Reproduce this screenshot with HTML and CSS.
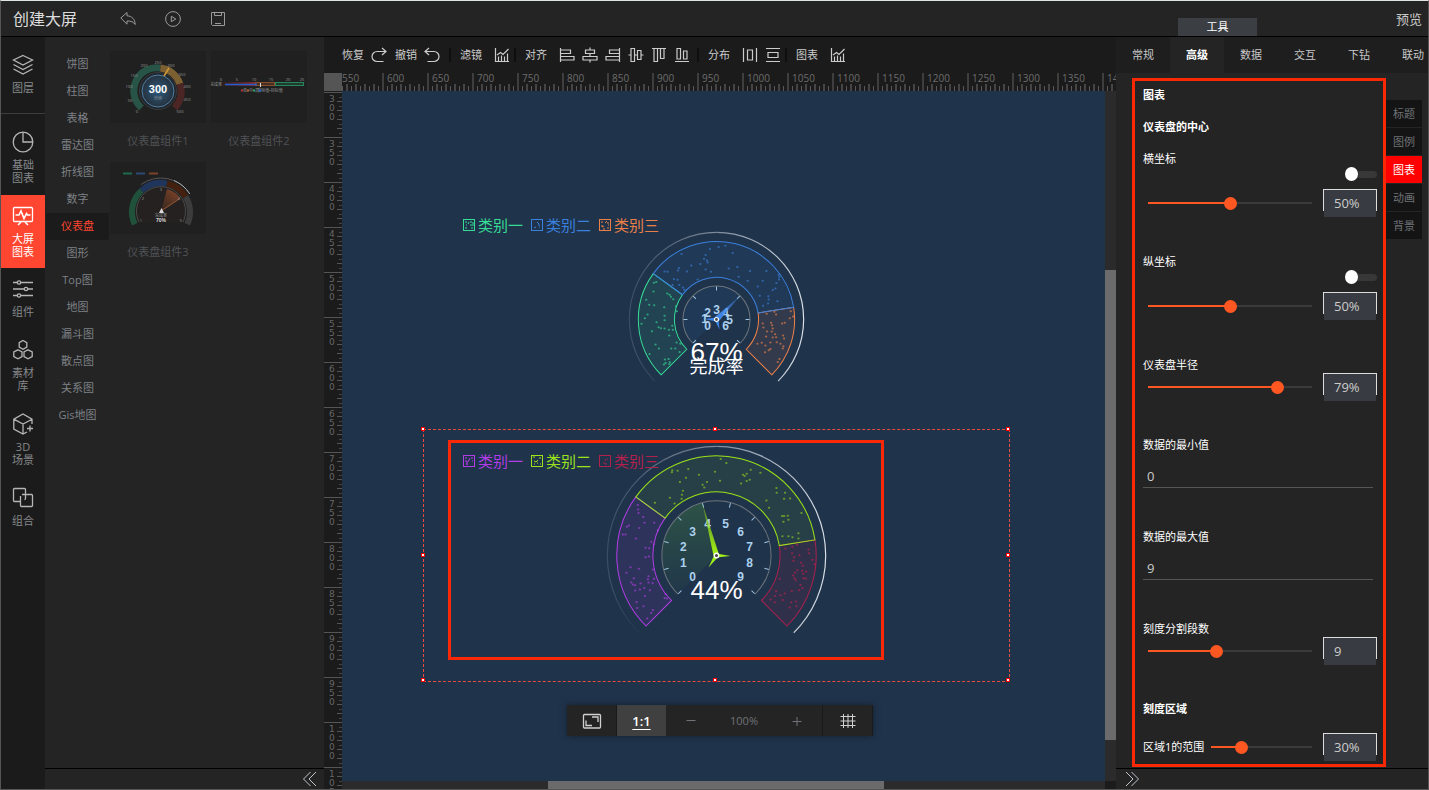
FILE: index.html
```html
<!DOCTYPE html>
<html lang="zh-CN">
<head>
<meta charset="utf-8">
<title>创建大屏</title>
<link rel="stylesheet" href="styles.css">
</head>
<body>
<svg class="defs" aria-hidden="true">
  <defs>
    <symbol id="i-chart" viewBox="0 0 16 16"><path d="M1.500 1v13.500H15M4.500 14V9.500M7.500 14V8.500M10.500 14V9.500M13.500 14V6.500M3 8l3.500-2.500L9 7.500 14.500 2"/></symbol>
    <symbol id="i-legend" viewBox="0 0 12 12"><rect x=".5" y=".5" width="11" height="11"/></symbol>
    <linearGradient id="fade"><stop offset="0" stop-color="#dfe6ee" stop-opacity=".15"/><stop offset=".5" stop-color="#dfe6ee" stop-opacity=".5"/><stop offset="1" stop-color="#eef2f6" stop-opacity=".9"/></linearGradient>
    <linearGradient id="fadeDown" x1="0" y1="0" x2="0" y2="1"><stop offset=".5" stop-color="#fff"/><stop offset=".75" stop-color="#fff"/><stop offset="1" stop-color="#000"/></linearGradient>
    <mask id="tail"><rect class="solid" x="-120" y="-120" width="120" height="200" fill="url(#fadeDown)"/><rect class="solid" x="0" y="-120" width="120" height="240" fill="#fff"/></mask>
    <linearGradient id="needleBlue" x1="0" y1="1" x2="1" y2="0"><stop offset="0" stop-color="#4a97ff"/><stop offset="1" stop-color="#3b80dd" stop-opacity=".4"/></linearGradient>
    <linearGradient id="needleGreen" x1="0" y1="1" x2="0" y2="0"><stop offset="0" stop-color="#a4f411"/><stop offset="1" stop-color="#8fd51a" stop-opacity=".45"/></linearGradient>
    <linearGradient id="sweep" x1="0" y1="1" x2="0" y2="0"><stop offset="0" stop-color="#4d9a3a" stop-opacity=".04"/><stop offset="1" stop-color="#4d9a3a" stop-opacity=".3"/></linearGradient>
    <radialGradient id="disc"><stop offset="0" stop-color="#2b5a80"/><stop offset="1" stop-color="#26323d"/></radialGradient>
    <linearGradient id="glow" x1="0" y1="1" x2=".6" y2="0"><stop offset="0" stop-color="#4a2e20" stop-opacity=".5"/><stop offset="1" stop-color="#7a4228"/></linearGradient>
    <linearGradient id="redbar"><stop offset="0" stop-color="#5c2222" stop-opacity=".2"/><stop offset="1" stop-color="#8c2a2a"/></linearGradient>
  </defs>
</svg>

<div class="app">
  <header class="topbar">
    <h1 class="topbar-title">创建大屏</h1>
    <div class="topbar-actions">
      <button class="icon-btn" aria-label="返回"><svg class="i16" viewBox="0 0 16 16"><path d="M.8 7 7 1.500v3.300c5 .2 8 3.500 8.200 8.700-1.800-2.600-4-3.600-8.200-3.500v3.200z"/></svg></button>
      <button class="icon-btn" aria-label="播放"><svg class="i16" viewBox="0 0 16 16"><circle cx="8" cy="8" r="7.400"/><path d="M6.300 5.300v5.400L10.800 8z"/></svg></button>
      <button class="icon-btn" aria-label="保存"><svg class="i16" viewBox="0 0 16 16"><path d="M1.500 1.500h13v13h-12l-1-1zM4.500 1.500v3h7v-3M5 12.500h6"/></svg></button>
    </div>
    <button class="tool-tab">工具</button>
    <a class="preview" href="#">预览</a>
  </header>

  <nav class="rail">
    <a class="rail-item rail-first" href="#"><svg class="i22" viewBox="0 0 22 22"><path d="M11 1.500 20.500 6 11 11 1.500 6zM1.500 10.500 11 15.500l9.500-5M1.500 15 11 20l9.500-5"/></svg><span>图层</span></a>
    <a class="rail-item rail-second" href="#"><svg class="i22" viewBox="0 0 22 22"><circle cx="11" cy="11" r="9.800"/><path d="M11 1.200V11h9.800"/></svg><span>基础<br>图表</span></a>
    <a class="rail-item is-active" href="#"><svg class="i22" viewBox="0 0 22 22"><rect x="1.500" y="2.500" width="19" height="14" rx="1"/><path d="M3.500 10h3.500l2-4 3 7.500 2.500-5 1 1.500h3M9 17l-3 3M13 17l3 3" stroke-width="1.600"/></svg><span>大屏<br>图表</span></a>
    <a class="rail-item" href="#"><svg class="i22" viewBox="0 0 22 22"><path d="M1 4.500h4M9 4.500h12M1 11h11M16 11h5M1 17.500h4M9 17.500h12"/><circle cx="7" cy="4.500" r="1.700"/><circle cx="14" cy="11" r="1.700"/><circle cx="7" cy="17.500" r="1.700"/></svg><span>组件</span></a>
    <a class="rail-item" href="#"><svg class="i22" viewBox="0 0 22 22"><path d="m11 1.500 3.800 2.200v4.400L11 10.300 7.200 8.100V3.700zM6 10.800l4 2.200v4.500l-4 2.300-4.200-2.300V13zM16 10.800l4.200 2.200v4.500L16 19.800l-4-2.300V13z"/></svg><span>素材<br>库</span></a>
    <a class="rail-item" href="#"><svg class="i22" viewBox="0 0 22 22"><path d="M20 11V6.200L11 1 1.800 6.200v10L11 21l4-2M1.800 6.200 11 11l9-4.800M11 11v10M18 12.500v6M15 15.500h6"/></svg><span>3D<br>场景</span></a>
    <a class="rail-item" href="#"><svg class="i22" viewBox="0 0 22 22"><path d="M8 14.500H2.500a1 1 0 0 1-1-1v-11a1 1 0 0 1 1-1h10a1 1 0 0 1 1 1v9a1 1 0 0 1-1 1"/><path d="M10 7.500h9.500a1 1 0 0 1 1 1v10a1 1 0 0 1-1 1h-10a1 1 0 0 1-1-1V9"/></svg><span>组合</span></a>
  </nav>

  <aside class="library">
    <div class="library-body">
      <ul class="kinds">
        <li><a href="#">饼图</a></li>
        <li><a href="#">柱图</a></li>
        <li><a href="#">表格</a></li>
        <li><a href="#">雷达图</a></li>
        <li><a href="#">折线图</a></li>
        <li><a href="#">数字</a></li>
        <li><a class="is-active" href="#">仪表盘</a></li>
        <li><a href="#">图形</a></li>
        <li><a href="#">Top图</a></li>
        <li><a href="#">地图</a></li>
        <li><a href="#">漏斗图</a></li>
        <li><a href="#">散点图</a></li>
        <li><a href="#">关系图</a></li>
        <li><a href="#">Gis地图</a></li>
      </ul>
      <div class="cards">
        <figure class="card">
          <svg class="thumb" viewBox="0 0 96 72">
            <g fill="none" stroke-width="7"><path stroke="#275446" d="M31.500 57A23 23 0 0 1 50.400 17.100"/><path stroke="#7c6032" d="M50.400 17.100A23 23 0 0 1 69.900 32.900"/><path stroke="#4c2525" d="M69.900 32.900A23 23 0 0 1 64.500 57"/></g>
            <circle cx="48" cy="40" r="18.500" fill="#20262b" stroke="#353b40"/>
            <circle cx="48" cy="40" r="16" fill="url(#disc)" stroke="#4f7fa6"/>
            <path d="M54 25 59 17" stroke="#d39a36" stroke-width="1.500"/>
            <text class="t-main" x="48" y="42">300</text><text class="t-tiny" x="48" y="49">分钟</text>
            <g class="t-tiny"><text x="27" y="62">0</text><text x="20" y="51">50</text><text x="19" y="37">100</text><text x="24" y="26">150</text><text x="34" y="16">200</text><text x="48" y="13">250</text><text x="61" y="16">300</text><text x="72" y="25">350</text><text x="77" y="37">400</text><text x="77" y="50">450</text><text x="70" y="62">500</text></g>
          </svg>
          <figcaption>仪表盘组件1</figcaption>
        </figure>
        <figure class="card">
          <svg class="thumb" viewBox="0 0 96 72">
            <rect class="solid" x="10" y="31" width="35" height="4" fill="url(#redbar)"/>
            <rect x="44.500" y="31.500" width="19" height="3" fill="#442f24" stroke="#8a4e2c"/>
            <rect x="64.500" y="31.500" width="28" height="3" fill="#1f3a2e" stroke="#27865a"/>
            <path d="M14 33.500h32" stroke="#245fd0" stroke-width="1.500"/><path d="M49.500 32v4" stroke="#ddd"/>
            <g class="t-tiny"><text x="5" y="35">完成率</text><text x="10" y="30">0</text><text x="26" y="30">5</text><text x="43" y="30">10</text><text x="60" y="30">15</text><text x="77" y="30">20</text><text x="91" y="30">25</text><text x="34" y="41">低</text><text x="40" y="41">中</text><text x="46" y="41">高</text><text x="59" y="41">实际值•目标值</text></g>
            <g stroke="none"><circle cx="31" cy="39.500" r="1.300" fill="#a83232"/><circle cx="37" cy="39.500" r="1.300" fill="#a8602f"/><circle cx="43" cy="39.500" r="1.300" fill="#2a9a67"/><circle cx="49" cy="39.500" r="1.300" fill="#2b67c8"/></g>
          </svg>
          <figcaption>仪表盘组件2</figcaption>
        </figure>
        <figure class="card">
          <svg class="thumb" viewBox="0 0 96 72">
            <path d="M13 11.500h9" stroke="#1e6b4c" stroke-width="2"/><path d="M26 11.500h9" stroke="#2b4877" stroke-width="2"/><path d="M39 11.500h9" stroke="#7a4228" stroke-width="2"/>
            <g fill="none" stroke-width="6"><path stroke="#20523b" d="M24.700 62.300A29 29 0 0 1 31.600 28.400"/><path stroke="#20355c" d="M31.600 28.400A29 29 0 0 1 57 21.600"/><path stroke="#44210f" d="M57 21.600A29 29 0 0 1 75.600 34.600"/><path stroke="#3c3c3c" d="M75.600 34.600A29 29 0 0 1 77.300 62.300"/></g>
            <path d="M31 22.500A34 34 0 0 1 79.800 32" fill="none" stroke="#555"/><path d="M64 18.500A34 34 0 0 1 79.800 32" fill="none" stroke="#aaa"/>
            <path d="M29 60A24.500 24.500 0 1 1 73 60" fill="#242120" stroke="#4b4b4b"/>
            <path class="solid" d="M51 50 57 27A24 24 0 0 1 70.500 36.500z" fill="url(#glow)"/>
            <path d="M51 49 69 37" stroke="#8d5535"/><path class="solid" d="m51.500 46 2.500 5h-5z" fill="#ddd"/>
            <g class="t-tiny"><text x="31" y="60">1</text><text x="33" y="38">2</text><text x="51" y="29">3</text><text x="69" y="38">4</text><text x="71" y="60">5</text><text x="51" y="55">完成率</text></g><text class="t-pct" x="51" y="60">70%</text>
          </svg>
          <figcaption>仪表盘组件3</figcaption>
        </figure>
      </div>
    </div>
    <div class="collapse collapse-left"><button class="icon-btn" aria-label="收起左侧"><svg class="i16" viewBox="0 0 16 16"><path d="M8.500 1 1.500 8l7 7M14 1 7 8l7 7"/></svg></button></div>
  </aside>

  <main class="work">
    <div class="toolbar">
      <button class="tb">恢复<svg class="i16" viewBox="0 0 16 16"><path d="M11 1l4 3.500-4 3.500M15 4.500H6a5 5 0 0 0 0 10h6.500"/></svg></button>
      <button class="tb">撤销<svg class="i16" viewBox="0 0 16 16"><path d="M5 1 1 4.500 5 8M1 4.500h9a5 5 0 0 1 0 10H3.500"/></svg></button>
      <span class="sep"></span>
      <button class="tb tb-wide">滤镜<svg class="i16"><use href="#i-chart"/></svg></button>
      <span class="sep sep-tight"></span>
      <span class="tb-label">对齐</span>
      <div class="tb-group">
        <button class="icon-btn" aria-label="左对齐"><svg class="i16" viewBox="0 0 16 16"><path d="M1.500 1v14M1.500 3h10v3.500h-10M1.500 9.500H15V13H1.500"/></svg></button>
        <button class="icon-btn" aria-label="水平居中"><svg class="i16" viewBox="0 0 16 16"><path d="M8 .5V3M8 6.500v3M8 13v2.500M3.500 3h9v3.500h-9zM1 9.500h14V13H1z"/></svg></button>
        <button class="icon-btn" aria-label="右对齐"><svg class="i16" viewBox="0 0 16 16"><path d="M14.500 1v14M14.500 3h-10v3.500h10M14.500 9.500H1V13h13.500"/></svg></button>
        <button class="icon-btn" aria-label="垂直居中"><svg class="i16" viewBox="0 0 16 16"><path d="M.5 8H3M6.500 8h3M13 8h2.500M3 1.500h3.500v13H3zM9.500 3.500H13v9H9.500z"/></svg></button>
        <button class="icon-btn" aria-label="顶对齐"><svg class="i16" viewBox="0 0 16 16"><path d="M1 1.500h14M3 1.500v13h3.500v-13M9.500 1.500v10H13v-10"/></svg></button>
        <button class="icon-btn" aria-label="底对齐"><svg class="i16" viewBox="0 0 16 16"><path d="M1 14.500h14M3 1.500h3.500v10.500H3zM9.500 4H13v8H9.500z"/></svg></button>
      </div>
      <span class="sep"></span>
      <span class="tb-label">分布</span>
      <div class="tb-group">
        <button class="icon-btn" aria-label="水平分布"><svg class="i16" viewBox="0 0 16 16"><path d="M1.500 1v14M14.500 1v14M5.500 3h5v10h-5z"/></svg></button>
        <button class="icon-btn" aria-label="垂直分布"><svg class="i16" viewBox="0 0 16 16"><path d="M1 1.500h14M1 14.500h14M3 5.500h10v5H3z"/></svg></button>
      </div>
      <span class="sep sep-tight"></span>
      <button class="tb tb-wide">图表<svg class="i16"><use href="#i-chart"/></svg></button>
    </div>

    <div class="ruler-corner"></div>
    <div class="ruler-x"><ol class="marks-x">
      <li>550</li><li>600</li><li>650</li><li>700</li><li>750</li><li>800</li><li>850</li><li>900</li><li>950</li><li>1000</li><li>1050</li><li>1100</li><li>1150</li><li>1200</li><li>1250</li><li>1300</li><li>1350</li><li>1400</li>
    </ol></div>
    <div class="ruler-y"><ol class="marks-y">
      <li><span>300</span></li><li><span>350</span></li><li><span>400</span></li><li><span>450</span></li><li><span>500</span></li><li><span>550</span></li><li><span>600</span></li><li><span>650</span></li><li><span>700</span></li><li><span>750</span></li><li><span>800</span></li><li><span>850</span></li><li><span>900</span></li><li><span>950</span></li><li><span>1000</span></li><li><span>1050</span></li>
    </ol></div>

    <section class="canvas">
      <div class="widget widget-a">
        <svg class="gauge" viewBox="-293 -126 586 252">
          <path d="M-61.500 61.500A87 87 0 1 1 61.500 61.500" fill="none" stroke="url(#fade)" stroke-width="1.200" mask="url(#tail)"/>
          <g stroke-width="1">
            <path stroke="#36dc96" fill="#36dc96" fill-opacity=".1" d="M-55.200 55.200A78 78 0 0 1-63.100-45.800L-34-24.700A42 42 0 0 0-29.700 29.700z"/>
            <path stroke="#f0824a" fill="#f0824a" fill-opacity=".09" d="M77-12.200A78 78 0 0 1 55.200 55.200L29.700 29.700A42 42 0 0 0 41.500-6.600z"/>
            <path stroke="#3b80dd" fill="#2f78c8" fill-opacity=".1" d="M-63.100-45.800A78 78 0 0 1 77-12.200L41.500-6.600A42 42 0 0 0-34-24.700z"/>
          </g>
          <g class="dots" transform="scale(.3333) translate(-829 -360)">
            <path stroke="#3b80dd" d="M724 164h1M809 149h1M835 143h1M855 139h1M877 161h1M796 167h1M791 178h1M800 183h1M802 189h1M780 194h1M753 198h1M740 216h1M796 210h1M812 217h1M716 206h1M713 213h1M673 216h1M682 217h1M865 207h1M891 203h1M929 215h1M895 232h1M922 244h1M978 215h1M967 244h1M952 261h1M1016 240h1M1017 232h1M1008 251h1M1005 267h1M997 272h1M1015 226h1M984 290h1M985 300h1M983 312h1M968 319h1M1011 305h1M958 289h1M701 239h1M712 241h1M697 257h1M717 257h1M728 264h1M732 271h1M772 240h1"/>
            <path stroke="#36dc96" d="M641 250h1M648 248h1M640 276h1M681 282h1M688 286h1M692 292h1M699 299h1M618 301h1M627 316h1M642 317h1M672 323h1M622 345h1M614 356h1M604 373h1M649 368h1M673 349h1M673 362h1M696 379h1M673 387h1M635 395h1M655 383h1M662 386h1M686 391h1M698 391h1M687 408h1M646 435h1M656 447h1M628 463h1M693 447h1M705 447h1M720 433h1M709 429h1M718 457h1M674 480h1M685 478h1M689 488h1M676 490h1M671 495h1M687 493h1M707 320h1M710 335h1"/>
            <path stroke="#f0824a" d="M979 343h1M1002 337h1M1007 345h1M1051 335h1M1058 351h1M1048 356h1M967 372h1M992 370h1M995 377h1M1025 372h1M1033 370h1M969 384h1M997 387h1M980 396h1M994 396h1M1004 404h1M1007 413h1M1028 408h1M1031 417h1M977 411h1M997 414h1M951 433h1M964 430h1M990 429h1M1009 428h1M1020 433h1M1029 440h1M1027 447h1M975 438h1M974 458h1M985 452h1M990 448h1M1017 478h1M1012 487h1"/>
          </g>
          <path class="solid" d="M0 0-23.700 23.700A33.500 33.500 0 0 1 23.700-23.700z" fill="#2f78c8" fill-opacity=".1"/>
          <path class="ring" d="M-23.700 23.700A33.500 33.500 0 1 1 23.700 23.700"/>
          <path class="ticks" d="M-33 0h4M33 0h-4M0-33v4M-23.300-23.300l2.800 2.800M23.300-23.300l-2.800 2.800M-23.300 23.300l2.800-2.800M23.300 23.300l-2.800-2.800"/>
          <g class="nums"><text x="-9" y="10">0</text><text x="-12" y="3">1</text><text x="-9" y="-3">2</text><text x="0" y="-6">3</text><text x="9" y="-3">4</text><text x="13" y="4">5</text><text x="9" y="10">6</text></g>
          <path class="solid" d="M-1.500-2.500 23-23 2.500 1.500z" fill="url(#needleBlue)"/>
          <path class="solid" d="M0-2-12-.5 0 2zM-2 0 3 10 2 0z" fill="#3f87ea"/>
          <circle r="2" fill="#444" stroke="#fff" stroke-width="1.200"/>
          <text class="pct" x="0" y="41">67%</text>
          <text class="name" x="0" y="53">完成率</text>
        </svg>
        <ul class="legend">
          <li class="c-mint"><svg class="i12" viewBox="0 0 12 12"><use href="#i-legend"/><path d="M2 3h2M5 5l1-2M8 2v2M10 3v4M2 9h2M7 6h2M8 9h2M3 6h1"/></svg>类别一</li>
          <li class="c-blue"><svg class="i12" viewBox="0 0 12 12"><use href="#i-legend"/><path d="M6 3l2 2v2M3 9l2-1M8 8h1"/></svg>类别二</li>
          <li class="c-orange"><svg class="i12" viewBox="0 0 12 12"><use href="#i-legend"/><path d="M2 3h2M6 4l2-2M9 3v2M3 6v2l2-1M8 9h2M9 6h1M4 10h2"/></svg>类别三</li>
        </ul>
      </div>

      <div class="widget widget-b is-selected">
        <svg class="gauge" viewBox="-293 -126 586 252">
          <path d="M-77.100 77.100A109 109 0 1 1 77.100 77.100" fill="none" stroke="url(#fade)" stroke-width="1.200" mask="url(#tail)"/>
          <g stroke-width="1">
            <path stroke="#b23de6" fill="#9a3cdc" fill-opacity=".12" d="M-70.400 70.400A99.500 99.500 0 0 1-80.500-58.500L-51.400-37.300A63.500 63.500 0 0 0-44.900 44.900z"/>
            <path stroke="#a9214f" fill="#b3204c" fill-opacity=".12" d="M98.300-15.600A99.500 99.500 0 0 1 70.400 70.400L44.900 44.900A63.500 63.500 0 0 0 62.700-9.900z"/>
            <path stroke="#9be21a" fill="#8fd51a" fill-opacity=".08" d="M-80.500-58.500A99.500 99.500 0 0 1 98.300-15.600L62.700-9.900A63.500 63.500 0 0 0-51.400-37.300z"/>
          </g>
          <g class="dots" transform="scale(.3333) translate(-919 -408)">
            <path stroke="#8fd51a" d="M786 153h1M785 159h1M802 154h1M834 149h1M866 166h1M827 175h1M809 188h1M914 157h1M929 184h1M890 188h1M877 196h1M882 204h1M818 214h1M815 226h1M814 238h1M779 235h1M734 250h1M793 252h1M931 119h1M948 131h1M1021 151h1M1050 160h1M998 166h1M1003 170h1M1009 163h1M1018 181h1M1009 185h1M992 192h1M1098 206h1M1099 220h1M1124 220h1M1139 237h1M1121 238h1M1068 243h1M1076 265h1M1173 281h1M1115 290h1M1121 290h1M1132 289h1M1134 301h1M1119 307h1M1164 341h1M1134 350h1M1116 350h1M1146 353h1M1164 357h1"/>
            <path stroke="#b23de6" d="M683 257h1M684 270h1M685 281h1M699 293h1M703 310h1M687 326h1M732 310h1M743 332h1M656 318h1M650 322h1M638 345h1M646 345h1M677 357h1M723 367h1M717 386h1M706 385h1M731 374h1M716 411h1M706 413h1M661 443h1M649 460h1M686 448h1M728 450h1M715 470h1M671 476h1M663 489h1M668 495h1M675 497h1M713 479h1M731 478h1M715 489h1M691 492h1M719 512h1M727 491h1M675 513h1M689 510h1M702 505h1M704 529h1M766 524h1M770 537h1M763 535h1M679 547h1M700 560h1M681 565h1M728 571h1M723 580h1M711 597h1"/>
            <path stroke="#c4204f" d="M1146 382h1M1160 376h1M1125 387h1M1145 401h1M1167 407h1M1194 390h1M1196 401h1M1149 424h1M1151 413h1M1172 430h1M1213 434h1M1206 421h1M1177 439h1M1175 454h1M1161 452h1M1154 460h1M1152 476h1M1156 482h1M1148 468h1M1187 457h1M1178 463h1M1186 477h1M1179 476h1M1108 478h1M1170 496h1M1176 505h1M1166 512h1M1097 515h1M1094 529h1M1081 540h1M1093 548h1M1110 527h1M1117 541h1M1123 522h1M1144 514h1M1142 548h1M1157 546h1M1158 560h1M1138 564h1"/>
          </g>
          <path class="solid" d="M0 0-38.500 38.500A54.500 54.500 0 0 1-14.100-52.600z" fill="url(#sweep)"/>
          <path class="ring" d="M-38.500 38.500A54.500 54.500 0 1 1 38.500 38.500"/>
          <path class="ticks" d="M-52.200 14l4.400-1.200M52.200 14l-4.400-1.200M-52.200-14l4.400 1.200M52.200-14l-4.400 1.200M-38.200-38.200l3.200 3.200M38.200-38.200 35-35M-38.200 38.200l3.200-3.200M38.200 38.200 35 35M-14-52.200l1.200 4.400M14-52.200l-1.200 4.400"/>
          <g class="nums"><text x="-24" y="25">0</text><text x="-33" y="11">1</text><text x="-33" y="-5">2</text><text x="-24" y="-19">3</text><text x="-9" y="-27">4</text><text x="9" y="-27">5</text><text x="24" y="-19">6</text><text x="33" y="-5">7</text><text x="33" y="11">8</text><text x="24" y="25">9</text></g>
          <path class="solid" d="M-3 0-14-52 2.500-1z" fill="url(#needleGreen)"/>
          <path class="solid" d="M0-2 14 .5 0 2zM-2-1-8 12 2 1z" fill="#9ff01a"/>
          <circle r="2.200" fill="#444" stroke="#fff" stroke-width="1.400"/>
          <text class="pct" x="0" y="43">44%</text>
        </svg>
        <ul class="legend">
          <li class="c-purple"><svg class="i12" viewBox="0 0 12 12"><use href="#i-legend"/><path d="M2 3h2M5 7l2-4M8 3h2M2 6h2v4M9 6h1M3 9h2"/></svg>类别一</li>
          <li class="c-lime"><svg class="i12" viewBox="0 0 12 12"><use href="#i-legend"/><path d="M2 2h2M3 6l2 1 2-2M8 3h2M9 9h1M3 9h1M6 8h1"/></svg>类别二</li>
          <li class="c-crimson"><svg class="i12" viewBox="0 0 12 12"><use href="#i-legend"/><path d="M6 9h2M6 6l1-2M5 7v2M8 4h1"/></svg>类别三</li>
        </ul>
        <i class="grip g-nw"></i><i class="grip g-n"></i><i class="grip g-ne"></i><i class="grip g-w"></i><i class="grip g-e"></i><i class="grip g-sw"></i><i class="grip g-s"></i><i class="grip g-se"></i>
      </div>
      <div class="mark mark-canvas"></div>

      <div class="zoombar">
        <button class="zb" aria-label="适应屏幕"><svg class="i20" viewBox="0 0 20 20"><rect x="1.500" y="3.500" width="17" height="13.500" rx="1"/><path d="M10 6h6v5M4 9.500v5h6"/></svg></button>
        <button class="zb is-active">1:1</button>
        <div class="zb-scale"><button class="icon-btn" aria-label="缩小"><svg class="i10" viewBox="0 0 10 10"><path d="M.5 4.500h9"/></svg></button><span>100%</span><button class="icon-btn" aria-label="放大"><svg class="i10" viewBox="0 0 10 10"><path d="M.5 5.500h9M5 1v9"/></svg></button></div>
        <button class="zb" aria-label="网格"><svg class="i16" viewBox="0 0 16 16"><path d="M3.500 1v14M8 1v14M12.500 1v14M.5 3.500h15M.5 8h15M.5 12.500h15"/></svg></button>
      </div>
    </section>
    <div class="bar-y"><div class="thumb-y"></div></div>
    <div class="bar-x"><div class="thumb-x"></div></div>
  </main>

  <aside class="props">
    <nav class="tabs"><a href="#">常规</a><a class="is-active" href="#">高级</a><a href="#">数据</a><a href="#">交互</a><a href="#">下钻</a><a href="#">联动</a></nav>
    <div class="props-body">
      <form class="form">
        <h2>图表</h2>
        <h2>仪表盘的中心</h2>
        <div class="field field-switch">
          <label for="cx">横坐标</label>
          <input class="switch" type="checkbox" aria-label="横坐标开关">
          <div class="slide"><input id="cx" type="range" value="50" style="--v:50%"><input class="num" type="text" value="50%" aria-label="横坐标值"></div>
        </div>
        <div class="field field-switch">
          <label for="cy">纵坐标</label>
          <input class="switch" type="checkbox" aria-label="纵坐标开关">
          <div class="slide"><input id="cy" type="range" value="50" style="--v:50%"><input class="num" type="text" value="50%" aria-label="纵坐标值"></div>
        </div>
        <div class="field">
          <label for="rad">仪表盘半径</label>
          <div class="slide"><input id="rad" type="range" value="79" style="--v:79%"><input class="num" type="text" value="79%" aria-label="半径值"></div>
        </div>
        <div class="field field-line">
          <label for="min">数据的最小值</label>
          <input id="min" class="line" type="text" value="0">
        </div>
        <div class="field field-line">
          <label for="max">数据的最大值</label>
          <input id="max" class="line" type="text" value="9">
        </div>
        <div class="field">
          <label for="split">刻度分割段数</label>
          <div class="slide"><input id="split" type="range" value="42" style="--v:42%"><input class="num" type="text" value="9" aria-label="段数值"></div>
        </div>
        <h2>刻度区域</h2>
        <div class="slide slide-inline"><label for="r1">区域1的范围</label><input id="r1" type="range" value="30" style="--v:30%"><input class="num" type="text" value="30%" aria-label="区域1值"></div>
        <div class="mark mark-form"></div>
      </form>
      <nav class="side"><a href="#">标题</a><a href="#">图例</a><a class="is-active" href="#">图表</a><a href="#">动画</a><a href="#">背景</a></nav>
    </div>
    <div class="collapse"><button class="icon-btn" aria-label="收起右侧"><svg class="i16" viewBox="0 0 16 16"><path d="M2 1l7 7-7 7M7.500 1l7 7-7 7"/></svg></button></div>
  </aside>
</div>
</body>
</html>
```

FILE: styles.css
```css
* { box-sizing: border-box; }

body {
  margin: 0;
  background: #242424;
  color: #c8c8c8;
  font: 11px/16px "Open Sans", "Noto Sans CJK SC", sans-serif;
}

a { color: inherit; text-decoration: none; }
ul, ol { margin: 0; padding: 0; list-style: none; }
h1, h2, figure { margin: 0; }
button { padding: 0; border: 0; background: none; color: inherit; font: inherit; cursor: pointer; }
input { font: inherit; color: inherit; }
svg { display: block; flex: none; fill: none; stroke: currentColor; overflow: visible; }
svg text, .solid { stroke: none; }

.defs { position: absolute; width: 0; height: 0; }
.i10 { width: 10px; height: 10px; }
.i12 { width: 12px; height: 12px; }
.i16 { width: 16px; height: 16px; }
.i20 { width: 20px; height: 20px; stroke-width: 1.3; }
.i22 { width: 22px; height: 22px; stroke-width: 1.3; }

.app {
  display: grid;
  grid-template-columns: 44px 279px minmax(0, 1fr) 312px;
  grid-template-rows: 36px minmax(0, 1fr);
  height: 100vh;
  border: 1px solid #555;
  border-top-color: #dfe5e3;
  overflow: hidden;
}

/* top bar */
.topbar {
  grid-column: 1 / -1;
  display: flex;
  align-items: center;
  padding: 0 6px 0 12px;
  border-bottom: 1px solid #000;
}
.topbar-title { color: #ddd; font-size: 16px; line-height: 24px; font-weight: 400; }
.topbar-actions { display: flex; gap: 29px; margin-left: 43px; color: #9a9a9a; }
.tool-tab {
  align-self: flex-end;
  width: 79px;
  height: 18px;
  margin-left: auto;
  background: #3b3e43;
  color: #fff;
}
.preview { margin-left: 139px; font-size: 13px; }

/* icon rail */
.rail { background: #1b1b1b; color: #b5b5b5; }
.rail-item {
  display: flex;
  flex-direction: column;
  align-items: center;
  gap: 5px;
  padding: 10px 0 11px;
  line-height: 13px;
  text-align: center;
}
.rail-item span { color: #85878a; }
.rail-first { padding: 17px 0 19px; border-bottom: 1px solid #3c3c3c; }
.rail-second { padding-top: 17px; }
.rail-item.is-active { background: #ff4630; color: #fff; padding-bottom: 10px; }
.rail-item.is-active span { color: #fff; }

/* component library */
.library, .props { display: flex; flex-direction: column; min-height: 0; min-width: 0; }
.library-body { flex: 1; display: flex; min-height: 0; padding-top: 14px; }
.kinds { width: 64px; margin-right: 1px; line-height: 27px; text-align: center; color: #7e8186; }
.kinds a { display: block; height: 27px; margin-left: 1px; line-height: 26px; }
.kinds .is-active { background: #1b1b1b; color: #ff4630; }
.cards { display: grid; grid-template-columns: 96px 96px; gap: 0 5px; align-content: start; }
.thumb { width: 96px; height: 72px; background: #202020; overflow: hidden; }
.card figcaption { height: 39px; line-height: 36px; text-align: center; color: #505256; }
.thumb text { text-anchor: middle; }
.t-main { font: bold 11px "Liberation Sans", sans-serif; fill: #fff; }
.t-pct { font: bold 5px "Liberation Sans", sans-serif; fill: #ddd; }
.t-tiny { font-size: 4px; fill: #999; }
.collapse {
  display: flex;
  align-items: center;
  height: 21px;
  flex: none;
  padding: 0 8px;
  border-top: 1px solid #000;
  color: #c0c6cc;
}
.collapse-left { justify-content: flex-end; padding: 0 6px; }

/* work area */
.work {
  display: grid;
  grid-template-columns: 18px minmax(0, 1fr) 11px;
  grid-template-rows: 36px 18px minmax(0, 1fr) 8px;
  min-width: 0;
  min-height: 0;
  background: #1b1b1b;
}
.toolbar { grid-column: 1 / -1; display: flex; align-items: center; padding-left: 18px; color: #ccc; }
.toolbar svg { stroke-width: 1.2; }
.tb { display: flex; align-items: center; gap: 7px; margin-right: 8px; }
.tb-wide { gap: 12px; }
.tb-wide + .sep-tight { margin-left: -4px; }
.sep { width: 2px; height: 14px; margin: 0 9px 0 1px; background: #0e0e0e; }
.sep-tight { margin-left: 4px; }
.tb-label { margin-right: 12px; }
.tb-group { display: flex; gap: 7px; }
.tb-group + .sep { margin-left: 7px; }
.tb-group + .sep-tight { margin-left: 4px; }

.ruler-corner { background: #555; }
.ruler-x { grid-column: 2 / -1; overflow-x: clip; }
.marks-x { display: flex; margin-left: -5px; }
.marks-x li {
  flex: 0 0 45px;
  height: 18px;
  padding-left: 3px;
  border-left: 2px solid #3e3e3e;
  background:
    repeating-linear-gradient(to right, #454545 0 2px, transparent 2px 9px) 7px 100% / 36px 7px no-repeat,
    repeating-linear-gradient(to right, #585858 0 1px, transparent 1px 9px) 3px 100% / 40px 5px no-repeat;
  color: #6c6c6c;
  font-size: 10px;
  line-height: 10px;
}
.ruler-y { grid-row: 3 / -1; overflow: hidden; padding-top: 1px; }
.marks-y li {
  height: 45px;
  padding: 2px 0 0 5px;
  border-top: 1px solid #555;
  background:
    repeating-linear-gradient(to bottom, #555 0 1px, transparent 1px 9px) 100% 8px / 5px 36px no-repeat,
    repeating-linear-gradient(to bottom, #444 0 1px, transparent 1px 9px) 100% 4px / 3px 40px no-repeat;
  color: #666;
  font: 9px/9px "DejaVu Sans", sans-serif;
}
.marks-y span { display: block; width: 6px; word-break: break-all; }

.canvas { position: relative; background: #1f334b; overflow: hidden; }
.bar-y { background: #2b2b2b; }
.thumb-y { height: 68%; background: #6b6b6b; position: relative; top: 26%; }
.bar-x { grid-column: 2; background: #2b2b2b; }
.thumb-x { width: 44%; height: 100%; margin-left: 27%; background: #6b6b6b; }

/* canvas widgets */
.widget { position: absolute; left: 81px; width: 587px; height: 253px; }
.widget-a { top: 102px; }
.widget-b { top: 338px; }
.is-selected { outline: 1px dashed #ef4b3c; outline-offset: -1px; }
.gauge { width: 100%; height: 100%; }
.dots { stroke-width: 6; stroke-linecap: round; opacity: .6; }
.ring { stroke: #6c747b; stroke-width: 1; }
.ticks { stroke: #9fc4e0; stroke-width: 1; }
.nums { font: bold 12px "Liberation Sans", sans-serif; fill: #abd0ee; text-anchor: middle; }
.pct { font: 26px "Liberation Sans", sans-serif; fill: #fff; text-anchor: middle; }
.name { font: 18px "Noto Sans CJK SC", sans-serif; fill: #fff; text-anchor: middle; }
.legend { position: absolute; top: 21px; left: 40px; display: flex; gap: 8px; font-size: 15px; line-height: 22px; }
.legend li { display: flex; align-items: center; gap: 3px; }
.c-mint { color: #36dc96; }
.c-blue { color: #3b80dd; }
.c-orange { color: #ea8048; }
.c-purple { color: #b23de6; }
.c-lime { color: #9be21a; }
.c-crimson { color: #b3204c; }

.grip { position: absolute; width: 4px; height: 4px; border: 1px solid #f00; background: #fff; }
.g-nw, .g-n, .g-ne { top: -2px; }
.g-sw, .g-s, .g-se { bottom: 0; }
.g-w, .g-e { top: 124px; }
.g-nw, .g-w, .g-sw { left: -2px; }
.g-n, .g-s { left: 290px; }
.g-ne, .g-e, .g-se { right: 0; }

.mark { position: absolute; border: 3px solid #fb2806; pointer-events: none; }
.mark-canvas { left: 106px; top: 349px; width: 436px; height: 220px; }
.mark-form { top: 5px; right: 0; bottom: 1px; left: 16px; }

.zoombar {
  position: absolute;
  left: 225px;
  bottom: 45px;
  display: flex;
  height: 31px;
  background: #242424;
  box-shadow: 0 0 6px #14202e;
}
.zb {
  display: flex;
  align-items: center;
  justify-content: center;
  width: 50px;
  border-right: 1px solid #1a1a1a;
  color: #d0d0d0;
}
.zb.is-active { width: 49px; background: #404040; color: #fff; border: 0; font-size: 13px; font-weight: 600; text-decoration: underline; text-underline-offset: 3px; }
.zb-scale { display: flex; align-items: center; justify-content: space-between; width: 157px; padding: 0 20px; border-right: 1px solid #1a1a1a; color: #707377; }

/* properties panel */
.tabs { display: flex; flex: none; overflow: hidden; background: #1e1e1e; line-height: 36px; text-align: center; }
.tabs a { flex: 0 0 54px; }
.tabs .is-active { background: #242424; color: #fff; font-weight: 700; }
.props-body { flex: 1; display: flex; min-height: 0; padding-right: 6px; }
.form { position: relative; flex: 1; min-width: 0; padding: 14px 9px 0 27px; overflow: hidden; color: #fff; }
.form h2 { margin-bottom: 16px; font-size: 11px; line-height: 16px; }
.field { display: flex; flex-direction: column; margin-bottom: 36px; }
.field-switch { margin-bottom: 37px; }
.field-line { margin-bottom: 41px; }
.slide { display: flex; align-items: center; height: 28px; }
.slide input[type="range"] {
  flex: 1;
  min-width: 0;
  height: 14px;
  margin: 0 5px 0 -1px;
  appearance: none;
  background: linear-gradient(to right, #ff5722 var(--v), #3a3a3a var(--v)) center / calc(100% - 12px) 2px no-repeat;
}
input[type="range"]::-webkit-slider-thumb { appearance: none; width: 13px; height: 13px; border-radius: 50%; background: #ff5722; }
.num {
  width: 54px;
  height: 28px;
  padding: 0 11px;
  border: 0;
  background:
    linear-gradient(#ddd, #ddd) 0 0 / 100% 1px no-repeat,
    linear-gradient(#ddd, #ddd) 0 0 / 1px 22px no-repeat,
    linear-gradient(#ddd, #ddd) 100% 0 / 1px 22px no-repeat,
    linear-gradient(#383b41, #383b41) center / calc(100% - 2px) 100% no-repeat;
  color: #ccc;
  font-size: 13px;
}
.slide-inline label { margin-right: 2px; }
.switch { position: relative; align-self: flex-end; width: 32px; height: 14px; margin: 0 0 8px; appearance: none; }
.switch::before { content: ""; position: absolute; top: 4px; right: 0; width: 26px; height: 7px; border-radius: 4px; background: #383838; }
.switch::after { content: ""; position: absolute; top: 0; left: 0; width: 13px; height: 14px; border-radius: 50%; background: #fff; }
.line { height: 35px; margin-right: 4px; padding: 12px 4px 0; border: 0; border-bottom: 1px solid #555; background: none; color: #ccc; font-size: 13px; }
.side { width: 36px; padding-top: 27px; display: flex; flex-direction: column; gap: 1px; text-align: center; line-height: 27px; color: #6f7276; }
.side a { background: #141414; }
.side .is-active { background: #f00; color: #fff; }
```
